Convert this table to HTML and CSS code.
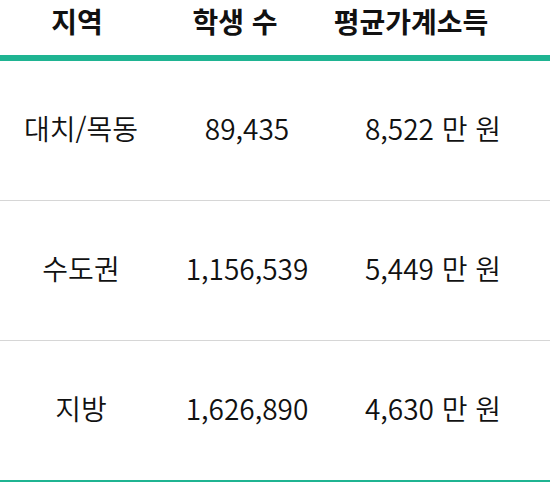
FILE: index.html
```html
<!DOCTYPE html>
<html lang="ko">
<head>
<meta charset="utf-8">
<link rel="stylesheet" href="styles.css">
</head>
<body>
<div class="table">
  <div class="row head">
    <div class="cell">지역</div>
    <div class="cell">학생 수</div>
    <div class="cell">평균가계소득</div>
  </div>
  <div class="row">
    <div class="cell">대치/목동</div>
    <div class="cell">89,435</div>
    <div class="cell">8,522 만 원</div>
  </div>
  <div class="row">
    <div class="cell">수도권</div>
    <div class="cell">1,156,539</div>
    <div class="cell">5,449 만 원</div>
  </div>
  <div class="row last">
    <div class="cell">지방</div>
    <div class="cell">1,626,890</div>
    <div class="cell">4,630 만 원</div>
  </div>
</div>
</body>
</html>
```
FILE: styles.css
```css
html, body {
  margin: 0;
  padding: 0;
  background: #ffffff;
  overflow: hidden;
}
.table {
  width: 550px;
  font-family: "Noto Sans CJK KR", "Noto Sans", sans-serif;
  color: #111111;
}
.row {
  display: grid;
  grid-template-columns: 162px 170px 202px 16px;
  height: 139px;
  align-items: center;
  border-bottom: 1px solid #d6d6d6;
  font-size: 28px;
  font-weight: 350;
}
.row .cell {
  padding-bottom: 5px;
}
.row.head {
  grid-template-columns: 154px 162px 190px 44px;
  height: 55px;
  border-bottom: 6px solid #1fb492;
  font-weight: 700;
  font-size: 28px;
  align-items: start;
}
.row.head .cell {
  padding-top: 3px;
  padding-bottom: 0;
}
.row.last {
  border-bottom: 6px solid #1fb492;
}
.cell {
  text-align: center;
  line-height: 1.3;
  white-space: nowrap;
}
```
